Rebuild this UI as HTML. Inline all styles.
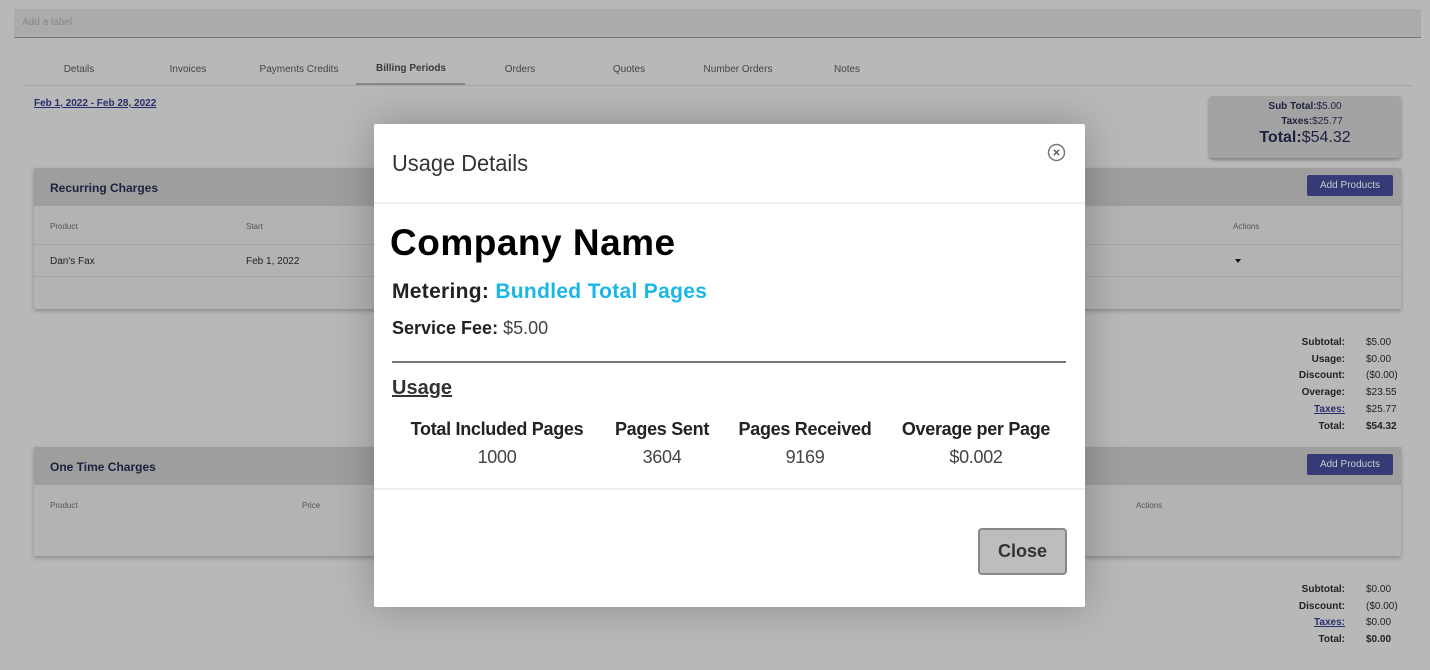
<!DOCTYPE html>
<html><head><style>
*{margin:0;padding:0;box-sizing:border-box}
body{width:1430px;height:670px;background:#b8b8b8;font-family:"Liberation Sans",sans-serif;position:relative;overflow:hidden;color:#222}
.a{position:absolute}
.tab{position:absolute;top:64px;font-size:10px;color:#444;width:110px;text-align:center}
.card{position:absolute;left:34px;width:1367px;background:#b3b3b3;box-shadow:0 2px 4px rgba(0,0,0,.25)}
.ch{height:38px;background:#9e9e9e;font-size:12px;font-weight:bold;color:#1d2140;padding:13px 16px}
.btn{position:absolute;right:8px;top:7px;background:#363a77;color:#ccc;font-size:10px;padding:5px 13px;border-radius:2px;font-weight:normal}
.th{font-size:8px;color:#555}
.sm{font-size:10px;color:#222}
.tot{position:absolute;font-size:10px;line-height:16.8px}
.tot .l{position:absolute;right:0;text-align:right;font-weight:bold;width:80px}
</style></head><body>
<div class="a" style="left:14px;top:9px;width:1407px;height:29px;background:#ababab;border-bottom:1px solid #777"></div>
<div class="a" style="left:22px;top:17px;font-size:10px;color:#888">Add a label</div>
<div class="tab" style="left:24px">Details</div>
<div class="tab" style="left:133px">Invoices</div>
<div class="tab" style="left:244px">Payments Credits</div>
<div class="tab" style="left:356px;top:63px;font-weight:bold;color:#3a3a3a">Billing Periods</div>
<div class="tab" style="left:465px">Orders</div>
<div class="tab" style="left:574px">Quotes</div>
<div class="tab" style="left:683px">Number Orders</div>
<div class="tab" style="left:792px">Notes</div>
<div class="a" style="left:24px;top:85px;width:1388px;height:1px;background:#a5a5a5"></div>
<div class="a" style="left:356px;top:83px;width:109px;height:2px;background:#888"></div>
<div class="a" style="left:34px;top:98px;font-size:10px;font-weight:bold;color:#2a2e6a;text-decoration:underline">Feb 1, 2022 - Feb 28, 2022</div>
<div class="a" style="left:1209px;top:96px;width:192px;height:62px;background:#a3a3a3;border-radius:4px;box-shadow:0 2px 3px rgba(0,0,0,.3);text-align:center;color:#1d2140">
<div style="font-size:10px;margin-top:5px"><b>Sub Total:</b>$5.00</div>
<div style="font-size:10px;margin-top:4px;padding-left:14px"><b>Taxes:</b>$25.77</div>
<div style="font-size:16px;margin-top:2px"><b>Total:</b>$54.32</div></div>

<div class="card" style="top:168px;height:141px"><div class="ch">Recurring Charges<span class="btn">Add Products</span></div>
<div class="a th" style="left:16px;top:54px">Product</div><div class="a th" style="left:212px;top:54px">Start</div><div class="a th" style="left:1199px;top:54px">Actions</div>
<div class="a" style="left:0;top:76px;width:100%;height:1px;background:#a5a5a5"></div>
<div class="a sm" style="left:16px;top:88px">Dan's Fax</div><div class="a sm" style="left:212px;top:88px">Feb 1, 2022</div>
<div class="a" style="left:1201px;top:91px;border:3px solid transparent;border-top:4px solid #111"></div>
<div class="a" style="left:0;top:108px;width:100%;height:1px;background:#a5a5a5"></div></div>

<div class="tot" style="left:1260px;top:335px;width:150px"><div style="position:relative;height:101px">
<div class="l" style="right:65px;top:0">Subtotal:</div><div class="a" style="left:106px;top:0">$5.00</div>
<div class="l" style="right:65px;top:17px">Usage:</div><div class="a" style="left:106px;top:17px">$0.00</div>
<div class="l" style="right:65px;top:33px">Discount:</div><div class="a" style="left:106px;top:33px">($0.00)</div>
<div class="l" style="right:65px;top:50px">Overage:</div><div class="a" style="left:106px;top:50px">$23.55</div>
<div class="l" style="right:65px;top:67px;color:#2a2e6a;text-decoration:underline">Taxes:</div><div class="a" style="left:106px;top:67px">$25.77</div>
<div class="l" style="right:65px;top:84px">Total:</div><div class="a" style="left:106px;top:84px;font-weight:bold">$54.32</div></div></div>

<div class="card" style="top:447px;height:109px"><div class="ch">One Time Charges<span class="btn">Add Products</span></div>
<div class="a th" style="left:16px;top:54px">Product</div><div class="a th" style="left:268px;top:54px">Price</div><div class="a th" style="left:1102px;top:54px">Actions</div></div>

<div class="tot" style="left:1260px;top:582px;width:150px"><div style="position:relative;height:70px">
<div class="l" style="right:65px;top:0">Subtotal:</div><div class="a" style="left:106px;top:0">$0.00</div>
<div class="l" style="right:65px;top:17px">Discount:</div><div class="a" style="left:106px;top:17px">($0.00)</div>
<div class="l" style="right:65px;top:33px;color:#2a2e6a;text-decoration:underline">Taxes:</div><div class="a" style="left:106px;top:33px">$0.00</div>
<div class="l" style="right:65px;top:50px">Total:</div><div class="a" style="left:106px;top:50px;font-weight:bold">$0.00</div></div></div>

<div class="a" style="left:374px;top:124px;width:711px;height:483px;background:#fff;border-radius:2px;box-shadow:0 0 40px rgba(0,0,0,.25)">
<div class="a" style="left:18px;top:26px;font-size:23px;color:#333;transform:scaleX(0.95);transform-origin:left">Usage Details</div>
<svg class="a" style="left:673px;top:19px" width="19" height="19" viewBox="0 0 19 19"><circle cx="9.5" cy="9.5" r="8" fill="none" stroke="#777" stroke-width="1.5"/><path d="M6.8 6.8l5.4 5.4M12.2 6.8l-5.4 5.4" stroke="#666" stroke-width="1.5"/></svg>
<div class="a" style="left:0;top:78px;width:100%;height:2px;background:#eee"></div>
<div class="a" style="left:16px;top:98px;font-size:37px;font-weight:bold;color:#000;letter-spacing:0.5px">Company Name</div>
<div class="a" style="left:18px;top:156px;font-size:21px;font-weight:bold;color:#222;letter-spacing:0.3px">Metering: <span style="color:#1ab7e6">Bundled Total Pages</span></div>
<div class="a" style="left:18px;top:194px;font-size:18px;color:#444"><b style="color:#222">Service Fee:</b> $5.00</div>
<div class="a" style="left:18px;top:237px;width:674px;height:2px;background:#777"></div>
<div class="a" style="left:18px;top:253px;font-size:20px;font-weight:bold;color:#333;text-decoration:underline">Usage</div>
<div class="a" style="left:24px;top:291px;width:198px;text-align:center;font-size:18px;font-weight:bold;color:#222;line-height:28px;letter-spacing:-0.3px">Total Included Pages<br><span style="font-weight:normal;color:#444">1000</span></div>
<div class="a" style="left:232px;top:291px;width:112px;text-align:center;font-size:18px;font-weight:bold;color:#222;line-height:28px;letter-spacing:-0.3px">Pages Sent<br><span style="font-weight:normal;color:#444">3604</span></div>
<div class="a" style="left:358px;top:291px;width:146px;text-align:center;font-size:18px;font-weight:bold;color:#222;line-height:28px;letter-spacing:-0.3px">Pages Received<br><span style="font-weight:normal;color:#444">9169</span></div>
<div class="a" style="left:520px;top:291px;width:164px;text-align:center;font-size:18px;font-weight:bold;color:#222;line-height:28px;letter-spacing:-0.3px">Overage per Page<br><span style="font-weight:normal;color:#444">$0.002</span></div>
<div class="a" style="left:0;top:364px;width:100%;height:2px;background:#eee"></div>
<div class="a" style="left:604px;top:404px;width:89px;height:47px;background:#bdbdbd;border:2px solid #888;border-radius:4px;font-size:18px;font-weight:bold;color:#333;text-align:center;line-height:43px">Close</div>
</div>
</body></html>
